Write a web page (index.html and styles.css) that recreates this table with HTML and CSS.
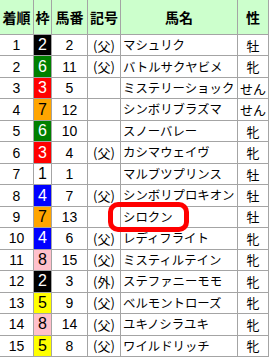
FILE: index.html
```html
<!DOCTYPE html>
<html lang="ja">
<head>
<meta charset="utf-8">
<link rel="stylesheet" href="styles.css">
</head>
<body>
<div class="wrap">
<table class="result">
<colgroup>
<col class="c-rank"><col class="c-waku"><col class="c-num"><col class="c-mark"><col class="c-name"><col class="c-sex">
</colgroup>
<thead>
<tr><th>着順</th><th>枠</th><th>馬番</th><th>記号</th><th>馬名</th><th>性</th></tr>
</thead>
<tbody>
<tr><td class="num">1</td><td class="waku w2">2</td><td class="num">2</td><td class="mark">(父)</td><td class="name">マシュリク</td><td class="sex">牡</td></tr>
<tr><td class="num">2</td><td class="waku w6">6</td><td class="num">11</td><td class="mark">(父)</td><td class="name">バトルサクヤビメ</td><td class="sex">牝</td></tr>
<tr><td class="num">3</td><td class="waku w3">3</td><td class="num">5</td><td class="mark"></td><td class="name">ミステリーショック</td><td class="sex">せん</td></tr>
<tr><td class="num">4</td><td class="waku w7">7</td><td class="num">12</td><td class="mark"></td><td class="name">シンボリブラズマ</td><td class="sex">せん</td></tr>
<tr><td class="num">5</td><td class="waku w6">6</td><td class="num">10</td><td class="mark"></td><td class="name">スノーバレー</td><td class="sex">牝</td></tr>
<tr><td class="num">6</td><td class="waku w3">3</td><td class="num">4</td><td class="mark">(父)</td><td class="name">カシマウェイヴ</td><td class="sex">牝</td></tr>
<tr><td class="num">7</td><td class="waku w1">1</td><td class="num">1</td><td class="mark"></td><td class="name">マルブツプリンス</td><td class="sex">牡</td></tr>
<tr><td class="num">8</td><td class="waku w4">4</td><td class="num">7</td><td class="mark">(父)</td><td class="name">シンボリプロキオン</td><td class="sex">牡</td></tr>
<tr><td class="num">9</td><td class="waku w7">7</td><td class="num">13</td><td class="mark"></td><td class="name">シロクン</td><td class="sex">牡</td></tr>
<tr><td class="num">10</td><td class="waku w4">4</td><td class="num">6</td><td class="mark">(父)</td><td class="name">レディフライト</td><td class="sex">牝</td></tr>
<tr><td class="num">11</td><td class="waku w8">8</td><td class="num">15</td><td class="mark">(父)</td><td class="name">ミスティルテイン</td><td class="sex">牝</td></tr>
<tr><td class="num">12</td><td class="waku w2">2</td><td class="num">3</td><td class="mark">(外)</td><td class="name">ステファニーモモ</td><td class="sex">牝</td></tr>
<tr><td class="num">13</td><td class="waku w5">5</td><td class="num">9</td><td class="mark">(父)</td><td class="name">ベルモントローズ</td><td class="sex">牝</td></tr>
<tr><td class="num">14</td><td class="waku w8">8</td><td class="num">14</td><td class="mark">(父)</td><td class="name">ユキノシラユキ</td><td class="sex">牝</td></tr>
<tr><td class="num">15</td><td class="waku w5">5</td><td class="num">8</td><td class="mark">(父)</td><td class="name">ワイルドリッチ</td><td class="sex">牝</td></tr>
</tbody>
</table>
<div class="highlight"></div>
</div>
</body>
</html>
```
FILE: styles.css
```css
html, body {
  margin: 0;
  padding: 0;
  background: #ffffff;
}
.wrap {
  position: relative;
  width: 270px;
  height: 360px;
  overflow: hidden;
}
.result {
  border-collapse: collapse;
  table-layout: fixed;
  width: 269px;
  margin: -1px 0 0 -1px;
  font-family: "Noto Sans CJK JP", "Liberation Sans", sans-serif;
  color: #000;
}
.c-rank { width: 34px; }
.c-waku { width: 18px; }
.c-num { width: 36px; }
.c-mark { width: 33px; }
.c-name { width: 117px; }
.c-sex { width: 31px; }
.result th, .result td {
  border: 1px solid #a4a4a4;
  padding: 0;
  text-align: center;
  white-space: nowrap;
  overflow: hidden;
}
.result th {
  background: #ccffcc;
  height: 34px;
  font-size: 14px;
  font-weight: bold;
  line-height: 1;
}
.result td {
  height: 20.47px;
  line-height: 1;
  background: #fff;
}
.result td.num {
  font-family: "Liberation Sans", sans-serif;
  font-size: 14px;
}
.result td.waku {
  font-family: "Liberation Sans", sans-serif;
  font-size: 16px;
}
.result td.mark {
  font-size: 13px;
}
.result td.name {
  text-align: left;
  padding-left: 2px;
  font-size: 12.4px;
}
.result td.sex {
  font-size: 13px;
}
.w1 { background: #ffffff !important; color: #000; }
.w2 { background: #000000 !important; color: #fff; }
.w3 { background: #ff0000 !important; color: #fff; }
.w4 { background: #0000ff !important; color: #fff; }
.w5 { background: #ffff00 !important; color: #000; }
.w6 { background: #008000 !important; color: #fff; }
.w7 { background: #ffa500 !important; color: #000; }
.w8 { background: #ffc0cb !important; color: #000; }
.highlight {
  position: absolute;
  left: 108px;
  top: 202px;
  width: 71px;
  height: 20px;
  border: 5px solid #ff0000;
  border-radius: 10px;
}
```
